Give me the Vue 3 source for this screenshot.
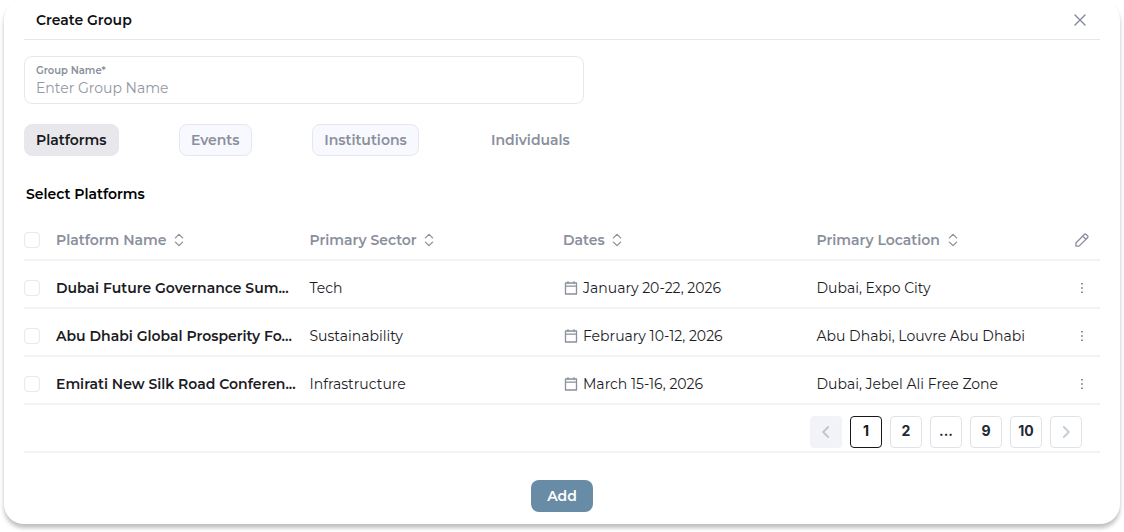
<script setup>
import { ref } from 'vue'

const groupName = ref('')

const tabs = [
  { label: 'Platforms', kind: 'active' },
  { label: 'Events', kind: 'boxed' },
  { label: 'Institutions', kind: 'boxed' },
  { label: 'Individuals', kind: 'plain' },
]

const columns = ['Platform Name', 'Primary Sector', 'Dates', 'Primary Location']

const rows = [
  { name: 'Dubai Future Governance Sum...', sector: 'Tech', dates: 'January 20-22, 2026', place: 'Dubai, Expo City' },
  { name: 'Abu Dhabi Global Prosperity Fo...', sector: 'Sustainability', dates: 'February 10-12, 2026', place: 'Abu Dhabi, Louvre Abu Dhabi' },
  { name: 'Emirati New Silk Road Conferen...', sector: 'Infrastructure', dates: 'March 15-16, 2026', place: 'Dubai, Jebel Ali Free Zone' },
]

const pages = ['1', '2', '...', '9', '10']
</script>

<template>
  <main class="page">
    <section class="card">
      <header class="head">
        <h1>Create Group</h1>
        <button class="close" aria-label="Close">
          <svg width="12" height="12" viewBox="0 0 12 12"><path d="M1 1l10 10M11 1L1 11" /></svg>
        </button>
      </header>

      <label class="field">
        <span>Group Name*</span>
        <input v-model="groupName" placeholder="Enter Group Name" />
      </label>

      <nav class="tabs">
        <button v-for="t in tabs" :key="t.label" :class="['tab', t.kind]">{{ t.label }}</button>
      </nav>

      <h2>Select Platforms</h2>

      <div class="table">
        <div class="row labels">
          <i class="check"></i>
          <div v-for="c in columns" :key="c" class="cell">
            <span>{{ c }}</span>
            <svg class="sort" width="10" height="14" viewBox="0 0 10 14"><path d="M1.4 4.9L5 1.4l3.6 3.5M1.4 9.1L5 12.6l3.6-3.5" /></svg>
          </div>
          <svg class="pencil" width="14" height="14" viewBox="0 0 14 14"><path d="M.9 13.1V10L9.3 1.5q1-1 2 0l1.2 1.2q1 1 0 2L4 13.1ZM7.8 3.1L10.9 6.2" /></svg>
        </div>
        <div v-for="r in rows" :key="r.name" class="row">
          <i class="check"></i>
          <div class="cell name">{{ r.name }}</div>
          <div class="cell">{{ r.sector }}</div>
          <div class="cell">
            <svg class="cal" width="14" height="14" viewBox="0 0 14 14"><path d="M1.5 2h11v11h-11ZM1.5 5.2h11M4 .7v1.7M10 .7v1.7" /></svg>
            <span>{{ r.dates }}</span>
          </div>
          <div class="cell">{{ r.place }}</div>
          <svg class="more" width="4" height="12" viewBox="0 0 4 12"><path d="M1 1h2v1.6H1ZM1 5.2h2v1.6H1ZM1 9.4h2V11H1Z" /></svg>
        </div>
        <div class="pager">
          <button class="pg off" aria-label="Previous page">
            <svg width="8" height="12" viewBox="0 0 8 12"><path d="M6.2 1L1.2 6l5 5" /></svg>
          </button>
          <button v-for="p in pages" :key="p" :class="['pg', { current: p === '1' }]">{{ p }}</button>
          <button class="pg next" aria-label="Next page">
            <svg width="8" height="12" viewBox="0 0 8 12"><path d="M1.8 1l5 5-5 5" /></svg>
          </button>
        </div>
      </div>

      <footer><button class="add">Add</button></footer>
    </section>
  </main>
</template>

<style>
html, body { margin: 0; background: #fff; overflow: hidden; }
</style>

<style scoped>
.page {
  box-sizing: border-box;
  height: 532px;
  padding: 0 4px 8px;
  font-family: Montserrat, Inter, sans-serif;
  font-size: 14px;
  line-height: 20px;
  color: #1b1c1f;
}
.card {
  box-sizing: border-box;
  height: 524px;
  padding: 0 20px;
  border-radius: 20px;
  background: #fff;
  box-shadow: 0 4px 4px rgba(0, 0, 0, 0.25);
}
button { font: inherit; border: 0; background: none; margin: 0; padding: 0; }
svg { display: block; flex: none; fill: none; stroke: #8a8f9c; stroke-width: 1.3; stroke-linecap: round; stroke-linejoin: round; }
h1, h2 { margin: 0; font-size: 14px; font-weight: 600; line-height: 20px; color: #101114; }
.head {
  box-sizing: border-box;
  height: 40px;
  display: flex;
  align-items: center;
  justify-content: space-between;
  padding: 0 14px 0 12px;
  border-bottom: 1px solid #e6e6e9;
}
.close svg { stroke: #85899a; stroke-width: 1.4; }
.field {
  box-sizing: border-box;
  display: flex;
  flex-direction: column;
  width: 560px;
  height: 48px;
  margin-top: 16px;
  padding: 6px 11px 0;
  border: 1px solid #e7e7ee;
  border-radius: 8px;
}
.field span { font-size: 10px; line-height: 15px; font-weight: 600; color: #8a8f9c; }
.field input { border: 0; outline: 0; padding: 0; font: inherit; height: 20px; background: none; }
.field input::placeholder { color: #9297a2; opacity: 1; }
.tabs { display: flex; gap: 60px; margin-top: 20px; }
.tab {
  box-sizing: border-box;
  height: 32px;
  padding: 0 11px;
  border: 1px solid transparent;
  border-radius: 8px;
  font-weight: 600;
  color: #8a8f9c;
}
.tab.active { background: #e7e7ec; border-color: #e7e7ec; color: #17181b; }
.tab.boxed { background: #f8f9fe; border-color: #e7e8ef; padding: 0 11.3px 0 11.4px; }
h2 { margin: 28px 0 0 2px; color: #000; }
.table { margin-top: 9px; }
.row {
  box-sizing: border-box;
  height: 48px;
  display: grid;
  grid-template-columns: 32px repeat(3, 253.5px) 1fr 36px;
  align-items: center;
  padding-top: 8px;
  border-bottom: 2px solid #f2f2f8;
}
.cell { display: flex; align-items: center; white-space: nowrap; }
.labels { font-weight: 600; color: #8a8f9c; }
.sort { margin-left: 7.7px; }
.name { font-weight: 600; }
.check { box-sizing: border-box; width: 16px; height: 16px; border: 1px solid #e7e7ee; border-radius: 4px; }
.cal { margin: 0 5px 1px 1px; }
.pencil, .more { justify-self: center; }
.more { fill: #8a8f9c; stroke: none; }
.pager {
  box-sizing: border-box;
  height: 48px;
  display: flex;
  justify-content: flex-end;
  gap: 8px;
  padding: 11px 18px 0 0;
  border-bottom: 2px solid #f2f2f8;
}
.pg {
  box-sizing: border-box;
  width: 32px;
  height: 32px;
  display: flex;
  align-items: center;
  justify-content: center;
  padding-bottom: 2px;
  border: 1px solid #dfe3e8;
  border-radius: 4px;
  font: 700 14px/20px Inter, sans-serif;
  color: #212b36;
}
.pg svg { stroke: #c4cdd5; stroke-width: 1.8; margin-top: 2px; }
.pg.off { background: #f2f3f8; border-color: #f2f3f8; }
.pg.off svg { stroke: #c3c5ca; }
.pg.current { border-color: #16171a; color: #16171a; }
footer { display: flex; justify-content: center; margin-top: 27px; }
.add {
  width: 62px;
  height: 32px;
  border-radius: 8px;
  background: #688ca6;
  color: #fff;
  font-weight: 600;
}
</style>
